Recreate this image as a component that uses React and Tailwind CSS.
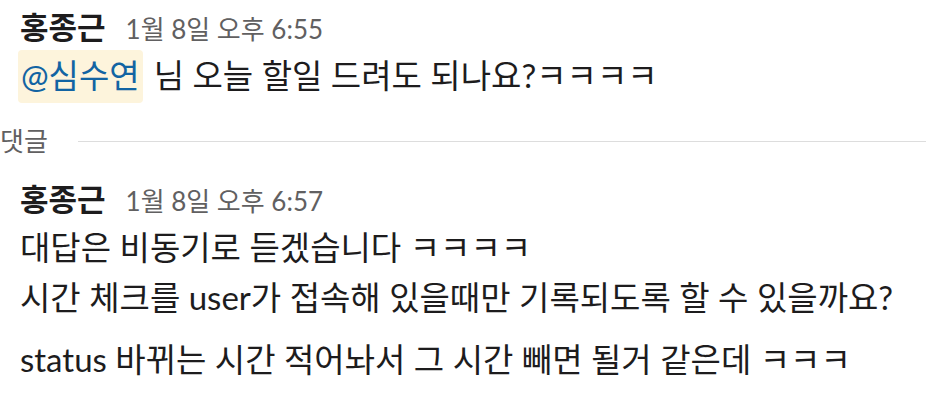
const FONT = "font-['Lato','Noto_Sans_CJK_KR',sans-serif]";

function Header({ time }) {
  return (
    <div className="flex items-baseline gap-[20px] h-[44px]">
      <span className="text-[31px] font-bold text-[#1d1c1d] leading-[44px]">홍종근</span>
      <span className="text-[26px] text-[#616061] leading-[44px]">{time}</span>
    </div>
  );
}

export default function App() {
  return (
    <div className={`w-[926px] h-[400px] bg-white overflow-hidden ${FONT}`}>
      <div className="pl-[20px] pt-[5px]">
        <Header time="1월 8일 오후 6:55" />
        <div className="flex items-center h-[54px] text-[33px] text-[#1d1c1d]">
          <span className="-ml-[2px] bg-[#fdf4dc] text-[#1264a3] rounded-[4px] px-[3px] h-[53px] flex items-center">
            @심수연
          </span>
          <span className="ml-[11px]">님 오늘 할일 드려도 되나요?ㅋㅋㅋㅋ</span>
        </div>
      </div>

      <div className="flex items-center h-[38px] mt-[19px]">
        <span className="text-[26px] text-[#616061]">댓글</span>
        <div className="flex-1 ml-[30px] h-px bg-[#dddddd]" />
      </div>

      <div className="pl-[20px] mt-[17px]">
        <Header time="1월 8일 오후 6:57" />
        <div className="text-[33px] text-[#1d1c1d] leading-[52px]">
          <p>대답은 비동기로 듣겠습니다 ㅋㅋㅋㅋ</p>
          <p className="-mt-[2px]">시간 체크를 user가 접속해 있을때만 기록되도록 할 수 있을까요?</p>
          <p className="mt-[10px]">status 바뀌는 시간 적어놔서 그 시간 빼면 될거 같은데 ㅋㅋㅋ</p>
        </div>
      </div>
    </div>
  );
}
